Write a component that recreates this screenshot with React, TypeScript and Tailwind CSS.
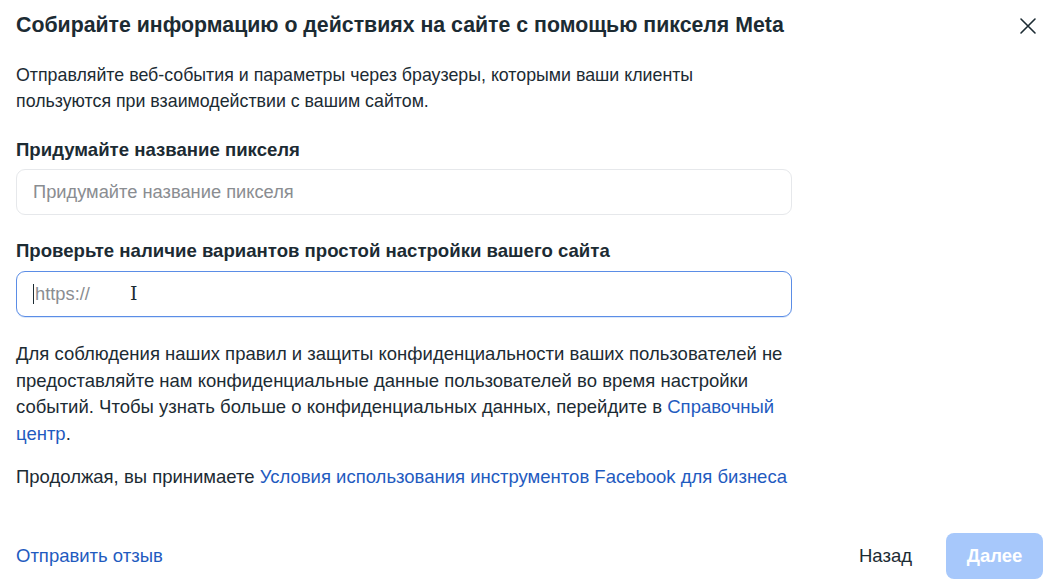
import React from 'react';

const font = { fontFamily: '"Liberation Sans", Arial, sans-serif' };

function CloseIcon() {
  return (
    <svg width="18" height="18" viewBox="0 0 18 18" fill="none" stroke="#1c2b33" strokeWidth="1.6" strokeLinecap="round">
      <path d="M2 2L16 16M16 2L2 16" />
    </svg>
  );
}

export default function App() {
  return (
    <div className="w-[1057px] h-[588px] bg-white text-[#1c2b33] flex flex-col" style={font}>
      <div className="flex items-start justify-between pl-4 pr-[20px] pt-[13px]">
        <h1 className="text-[21.3px] font-bold leading-[24px]">
          Собирайте информацию о действиях на сайте с помощью пикселя Meta
        </h1>
        <button className="mt-[4px]">
          <CloseIcon />
        </button>
      </div>

      <div className="px-4 w-[808px]">
        <p className="mt-[25px] text-[17.8px] leading-[26px]">
          Отправляйте веб-события и параметры через браузеры, которыми ваши клиенты пользуются при взаимодействии с вашим сайтом.
        </p>

        <div className="mt-[25px] text-[18.6px] font-bold leading-[22px]">Придумайте название пикселя</div>
        <div className="mt-[8px] h-[46px] rounded-[9px] border border-[#e6e8eb] flex items-center px-4 text-[18.3px] text-[#8a8d91]">
          Придумайте название пикселя
        </div>

        <div className="mt-[25px] text-[18.6px] font-bold leading-[22px]">Проверьте наличие вариантов простой настройки вашего сайта</div>
        <div className="relative mt-[9px] h-[46px] rounded-[9px] border-[1.5px] border-[#5b8de6] shadow-[0_1px_0_0_#dbe8fb] flex items-center px-4 text-[18.3px] text-[#8a8d91]">
          <span className="w-px h-[20px] bg-[#1c2b33] mr-px" />
          https://
          <span className="absolute left-[113px] top-[11px] text-[#1c2b33] text-[19px] leading-[20px]" style={{ fontFamily: '"DejaVu Serif", serif' }}>
            I
          </span>
        </div>

        <p className="mt-[24px] text-[18.5px] leading-[26.6px]">
          Для соблюдения наших правил и защиты конфиденциальности ваших пользователей не предоставляйте нам конфиденциальные данные пользователей во время настройки событий. Чтобы узнать больше о конфиденциальных данных, перейдите в{' '}
          <a className="text-[#1f5bbf]">Справочный центр</a>.
        </p>

        <p className="mt-[17px] text-[18.5px] leading-[26px]">
          Продолжая, вы принимаете <a className="text-[#1f5bbf]">Условия использования инструментов Facebook для бизнеса</a>
        </p>
      </div>

      <div className="mt-auto flex items-center justify-between pl-4 pr-[14px] pb-[9px]">
        <a className="text-[18.5px] text-[#1f5bbf]">Отправить отзыв</a>
        <div className="flex items-center gap-[34px]">
          <button className="text-[18.5px] text-[#1c2b33]">Назад</button>
          <button className="w-[97px] h-[46px] rounded-[8px] bg-[#a7c8fb] text-white font-bold text-[18.5px]">Далее</button>
        </div>
      </div>
    </div>
  );
}
